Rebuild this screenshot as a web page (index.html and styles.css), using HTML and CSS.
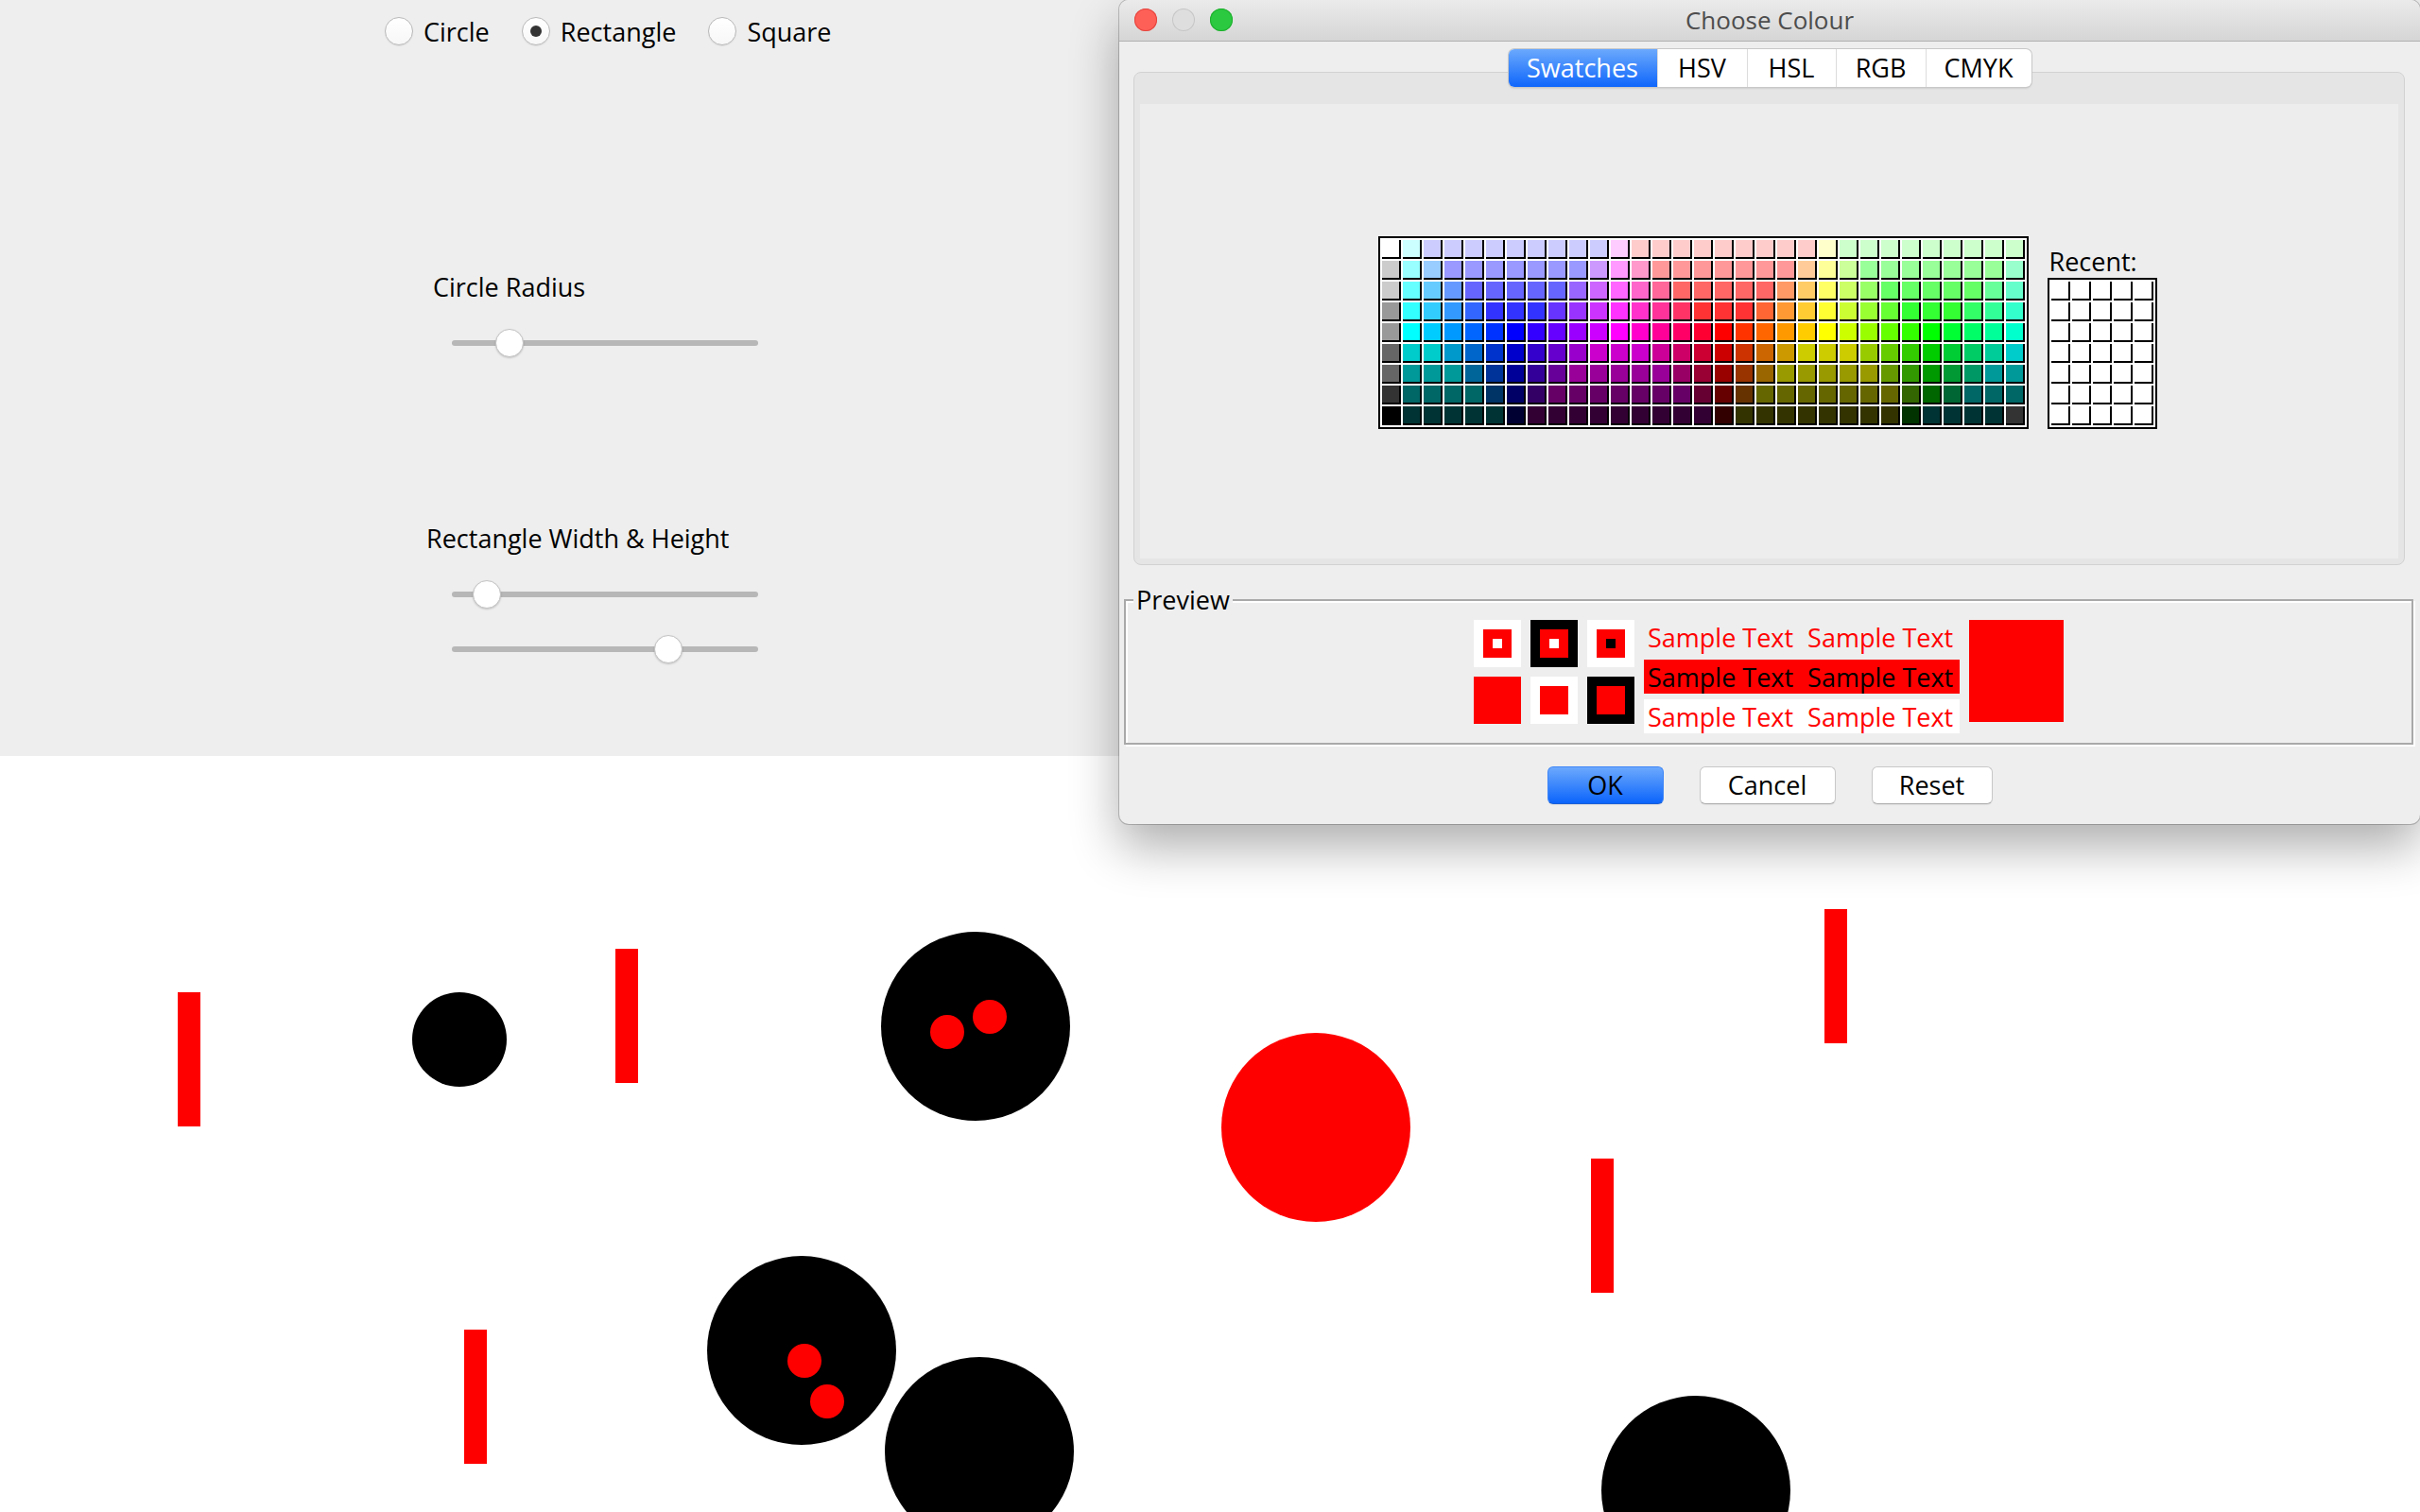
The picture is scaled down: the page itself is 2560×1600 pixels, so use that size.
FILE: index.html
```html
<!DOCTYPE html>
<html lang="en">
<head>
<meta charset="utf-8">
<title>Shapes</title>
<link rel="stylesheet" href="styles.css">
</head>
<body>
<main class="app">
  <section class="controls">
    <div class="radios">
      <label class="radio"><span class="radio-box"></span><span class="radio-text">Circle</span></label>
      <label class="radio"><span class="radio-box on"></span><span class="radio-text">Rectangle</span></label>
      <label class="radio"><span class="radio-box"></span><span class="radio-text">Square</span></label>
    </div>
    <div class="ctl-label label-radius">Circle Radius</div>
    <div class="slider s1"><span class="thumb" style="left:46px"></span></div>
    <div class="ctl-label label-rect">Rectangle Width &amp; Height</div>
    <div class="slider s2"><span class="thumb" style="left:22px"></span></div>
    <div class="slider s3"><span class="thumb" style="left:214px"></span></div>
  </section>
  <section class="canvas">
    <div class="shape rect" style="left:188px;top:250px"></div>
    <div class="shape rect" style="left:651px;top:204px"></div>
    <div class="shape rect" style="left:1930px;top:162px"></div>
    <div class="shape rect" style="left:1683px;top:426px"></div>
    <div class="shape rect" style="left:491px;top:607px"></div>
    <div class="shape circle small black" style="left:436px;top:250px"></div>
    <div class="shape circle big black" style="left:932px;top:186px"></div>
    <div class="shape circle dot" style="left:984px;top:274px"></div>
    <div class="shape circle dot" style="left:1029px;top:258px"></div>
    <div class="shape circle big red" style="left:1292px;top:293px"></div>
    <div class="shape circle big black" style="left:748px;top:529px"></div>
    <div class="shape circle dot" style="left:833px;top:622px"></div>
    <div class="shape circle dot" style="left:857px;top:665px"></div>
    <div class="shape circle big black" style="left:936px;top:636px"></div>
    <div class="shape circle big black" style="left:1694px;top:677px"></div>
  </section>
</main>

<div class="dialog">
  <header class="titlebar">
    <div class="lights"><span class="light close"></span><span class="light min"></span><span class="light zoom"></span></div>
    <div class="title">Choose Colour</div>
    <div></div>
  </header>

  <nav class="tabs">
    <span class="tab sel w1">Swatches</span>
    <span class="tab w2">HSV</span>
    <span class="tab w3">HSL</span>
    <span class="tab w4">RGB</span>
    <span class="tab w5">CMYK</span>
  </nav>

  <div class="tabpanel">
    <div class="swatch-pane">
      <div class="swatch-row">
        <div class="swatches main-grid">
<i style="background:#fff"></i><i style="background:#cff"></i><i style="background:#ccf"></i><i style="background:#ccf"></i><i style="background:#ccf"></i><i style="background:#ccf"></i><i style="background:#ccf"></i><i style="background:#ccf"></i><i style="background:#ccf"></i><i style="background:#ccf"></i><i style="background:#ccf"></i><i style="background:#fcf"></i><i style="background:#fcc"></i><i style="background:#fcc"></i><i style="background:#fcc"></i><i style="background:#fcc"></i><i style="background:#fcc"></i><i style="background:#fcc"></i><i style="background:#fcc"></i><i style="background:#fcc"></i><i style="background:#fcc"></i><i style="background:#ffc"></i><i style="background:#cfc"></i><i style="background:#cfc"></i><i style="background:#cfc"></i><i style="background:#cfc"></i><i style="background:#cfc"></i><i style="background:#cfc"></i><i style="background:#cfc"></i><i style="background:#cfc"></i><i style="background:#cfc"></i>
<i style="background:#ccc"></i><i style="background:#9ff"></i><i style="background:#9cf"></i><i style="background:#99f"></i><i style="background:#99f"></i><i style="background:#99f"></i><i style="background:#99f"></i><i style="background:#99f"></i><i style="background:#99f"></i><i style="background:#99f"></i><i style="background:#c9f"></i><i style="background:#f9f"></i><i style="background:#f9c"></i><i style="background:#f99"></i><i style="background:#f99"></i><i style="background:#f99"></i><i style="background:#f99"></i><i style="background:#f99"></i><i style="background:#f99"></i><i style="background:#f99"></i><i style="background:#fc9"></i><i style="background:#ff9"></i><i style="background:#cf9"></i><i style="background:#9f9"></i><i style="background:#9f9"></i><i style="background:#9f9"></i><i style="background:#9f9"></i><i style="background:#9f9"></i><i style="background:#9f9"></i><i style="background:#9f9"></i><i style="background:#9fc"></i>
<i style="background:#ccc"></i><i style="background:#6ff"></i><i style="background:#6cf"></i><i style="background:#69f"></i><i style="background:#66f"></i><i style="background:#66f"></i><i style="background:#66f"></i><i style="background:#66f"></i><i style="background:#66f"></i><i style="background:#96f"></i><i style="background:#c6f"></i><i style="background:#f6f"></i><i style="background:#f6c"></i><i style="background:#f69"></i><i style="background:#f66"></i><i style="background:#f66"></i><i style="background:#f66"></i><i style="background:#f66"></i><i style="background:#f66"></i><i style="background:#f96"></i><i style="background:#fc6"></i><i style="background:#ff6"></i><i style="background:#cf6"></i><i style="background:#9f6"></i><i style="background:#6f6"></i><i style="background:#6f6"></i><i style="background:#6f6"></i><i style="background:#6f6"></i><i style="background:#6f6"></i><i style="background:#6f9"></i><i style="background:#6fc"></i>
<i style="background:#999"></i><i style="background:#3ff"></i><i style="background:#3cf"></i><i style="background:#39f"></i><i style="background:#36f"></i><i style="background:#33f"></i><i style="background:#33f"></i><i style="background:#33f"></i><i style="background:#63f"></i><i style="background:#93f"></i><i style="background:#c3f"></i><i style="background:#f3f"></i><i style="background:#f3c"></i><i style="background:#f39"></i><i style="background:#f36"></i><i style="background:#f33"></i><i style="background:#f33"></i><i style="background:#f33"></i><i style="background:#f63"></i><i style="background:#f93"></i><i style="background:#fc3"></i><i style="background:#ff3"></i><i style="background:#cf3"></i><i style="background:#9f3"></i><i style="background:#6f3"></i><i style="background:#3f3"></i><i style="background:#3f3"></i><i style="background:#3f3"></i><i style="background:#3f6"></i><i style="background:#3f9"></i><i style="background:#3fc"></i>
<i style="background:#999"></i><i style="background:#0ff"></i><i style="background:#0cf"></i><i style="background:#09f"></i><i style="background:#06f"></i><i style="background:#03f"></i><i style="background:#00f"></i><i style="background:#30f"></i><i style="background:#60f"></i><i style="background:#90f"></i><i style="background:#c0f"></i><i style="background:#f0f"></i><i style="background:#f0c"></i><i style="background:#f09"></i><i style="background:#f06"></i><i style="background:#f03"></i><i style="background:#f00"></i><i style="background:#f30"></i><i style="background:#f60"></i><i style="background:#f90"></i><i style="background:#fc0"></i><i style="background:#ff0"></i><i style="background:#cf0"></i><i style="background:#9f0"></i><i style="background:#6f0"></i><i style="background:#3f0"></i><i style="background:#0f0"></i><i style="background:#0f3"></i><i style="background:#0f6"></i><i style="background:#0f9"></i><i style="background:#0fc"></i>
<i style="background:#666"></i><i style="background:#0cc"></i><i style="background:#0cc"></i><i style="background:#09c"></i><i style="background:#06c"></i><i style="background:#03c"></i><i style="background:#00c"></i><i style="background:#30c"></i><i style="background:#60c"></i><i style="background:#90c"></i><i style="background:#c0c"></i><i style="background:#c0c"></i><i style="background:#c0c"></i><i style="background:#c09"></i><i style="background:#c06"></i><i style="background:#c03"></i><i style="background:#c00"></i><i style="background:#c30"></i><i style="background:#c60"></i><i style="background:#c90"></i><i style="background:#cc0"></i><i style="background:#cc0"></i><i style="background:#cc0"></i><i style="background:#9c0"></i><i style="background:#6c0"></i><i style="background:#3c0"></i><i style="background:#0c0"></i><i style="background:#0c3"></i><i style="background:#0c6"></i><i style="background:#0c9"></i><i style="background:#0cc"></i>
<i style="background:#666"></i><i style="background:#099"></i><i style="background:#099"></i><i style="background:#099"></i><i style="background:#069"></i><i style="background:#039"></i><i style="background:#009"></i><i style="background:#309"></i><i style="background:#609"></i><i style="background:#909"></i><i style="background:#909"></i><i style="background:#909"></i><i style="background:#909"></i><i style="background:#909"></i><i style="background:#906"></i><i style="background:#903"></i><i style="background:#900"></i><i style="background:#930"></i><i style="background:#960"></i><i style="background:#990"></i><i style="background:#990"></i><i style="background:#990"></i><i style="background:#990"></i><i style="background:#990"></i><i style="background:#690"></i><i style="background:#390"></i><i style="background:#090"></i><i style="background:#093"></i><i style="background:#096"></i><i style="background:#099"></i><i style="background:#099"></i>
<i style="background:#333"></i><i style="background:#066"></i><i style="background:#066"></i><i style="background:#066"></i><i style="background:#066"></i><i style="background:#036"></i><i style="background:#006"></i><i style="background:#306"></i><i style="background:#606"></i><i style="background:#606"></i><i style="background:#606"></i><i style="background:#606"></i><i style="background:#606"></i><i style="background:#606"></i><i style="background:#606"></i><i style="background:#603"></i><i style="background:#600"></i><i style="background:#630"></i><i style="background:#660"></i><i style="background:#660"></i><i style="background:#660"></i><i style="background:#660"></i><i style="background:#660"></i><i style="background:#660"></i><i style="background:#660"></i><i style="background:#360"></i><i style="background:#060"></i><i style="background:#063"></i><i style="background:#066"></i><i style="background:#066"></i><i style="background:#066"></i>
<i style="background:#000"></i><i style="background:#033"></i><i style="background:#033"></i><i style="background:#033"></i><i style="background:#033"></i><i style="background:#033"></i><i style="background:#003"></i><i style="background:#303"></i><i style="background:#303"></i><i style="background:#303"></i><i style="background:#303"></i><i style="background:#303"></i><i style="background:#303"></i><i style="background:#303"></i><i style="background:#303"></i><i style="background:#303"></i><i style="background:#300"></i><i style="background:#330"></i><i style="background:#330"></i><i style="background:#330"></i><i style="background:#330"></i><i style="background:#330"></i><i style="background:#330"></i><i style="background:#330"></i><i style="background:#330"></i><i style="background:#030"></i><i style="background:#033"></i><i style="background:#033"></i><i style="background:#033"></i><i style="background:#033"></i><i style="background:#333"></i>
        </div>
        <div class="recent-col">
          <div class="recent-label">Recent:</div>
          <div class="swatches recent-grid">
<i></i><i></i><i></i><i></i><i></i>
<i></i><i></i><i></i><i></i><i></i>
<i></i><i></i><i></i><i></i><i></i>
<i></i><i></i><i></i><i></i><i></i>
<i></i><i></i><i></i><i></i><i></i>
<i></i><i></i><i></i><i></i><i></i>
<i></i><i></i><i></i><i></i><i></i>
          </div>
        </div>
      </div>
    </div>
  </div>

  <fieldset class="preview">
    <legend>Preview</legend>
    <div class="pv">
      <div class="pv-squares">
        <div class="sq bg-white"><div class="sq-in"><span class="sq-dot d-white"></span></div></div>
        <div class="sq bg-black"><div class="sq-in"><span class="sq-dot d-white"></span></div></div>
        <div class="sq bg-white"><div class="sq-in"><span class="sq-dot d-black"></span></div></div>
        <div class="sq bg-red"></div>
        <div class="sq bg-white"><div class="sq-in"></div></div>
        <div class="sq bg-black"><div class="sq-in"></div></div>
      </div>
      <div class="pv-texts">
        <div class="pt"><span>Sample Text</span><span>Sample Text</span></div>
        <div class="pt pt-inv"><span>Sample Text</span><span>Sample Text</span></div>
        <div class="pt pt-white"><span>Sample Text</span><span>Sample Text</span></div>
      </div>
      <div class="pv-big"></div>
    </div>
  </fieldset>

  <div class="buttons">
    <button class="btn btn-ok">OK</button>
    <button class="btn btn-cancel">Cancel</button>
    <button class="btn btn-reset">Reset</button>
  </div>
</div>
</body>
</html>
```

FILE: styles.css
```css
* { box-sizing: border-box; }

html, body { margin: 0; padding: 0; }

body {
  width: 2560px;
  height: 1600px;
  overflow: hidden;
  position: relative;
  background: #fff;
  color: #000;
  font-family: "Open Sans", "DejaVu Sans", sans-serif;
  font-size: 27px;
}

/* ---------- left controls ---------- */
.controls {
  height: 800px;
  background: #eeeeee;
  padding-top: 18px;
}

.radios {
  display: flex;
  height: 30px;
  margin-left: 407px;
}

.radio {
  display: flex;
  align-items: flex-start;
  margin-right: 34px;
}

.radio-box {
  width: 30px;
  height: 30px;
  border-radius: 50%;
  background: linear-gradient(#ffffff, #f7f7f7);
  border: 1px solid #b8b8b8;
  box-shadow: 0 1px 1px rgba(0, 0, 0, 0.08);
  display: flex;
  align-items: center;
  justify-content: center;
}

.radio-box.on::after {
  content: "";
  width: 12px;
  height: 12px;
  border-radius: 50%;
  background: #333;
}

.radio-text {
  margin-left: 11px;
  line-height: 30px;
  padding-top: 0.5px;
}

.ctl-label {
  height: 30px;
  line-height: 30px;
  white-space: nowrap;
}

.label-radius { margin-top: 240.5px; padding-left: 458px; }
.label-rect { margin-top: 176.5px; padding-left: 451px; }

.slider {
  position: relative;
  width: 324px;
  height: 30px;
  margin-left: 478px;
}

.slider::before {
  content: "";
  position: absolute;
  left: 0;
  right: 0;
  top: 12px;
  height: 6px;
  border-radius: 3px;
  background: #b7b7b7;
}

.s1 { margin-top: 29.5px; }
.s2 { margin-top: 29.5px; }
.s3 { margin-top: 28px; }

.thumb {
  position: absolute;
  top: 0;
  width: 30px;
  height: 30px;
  border-radius: 50%;
  background: #fff;
  border: 1px solid #c3c3c3;
  box-shadow: 0 1px 2px rgba(0, 0, 0, 0.18);
}

/* ---------- drawing canvas ---------- */
.canvas {
  position: relative;
  height: 800px;
  background: #fff;
}

.shape { position: absolute; }
.rect { width: 24px; height: 142px; background: #ff0000; }
.circle { border-radius: 50%; }
.big { width: 200px; height: 200px; }
.small { width: 100px; height: 100px; }
.dot { width: 36px; height: 36px; background: #ff0000; }
.black { background: #000; }
.red { background: #ff0000; }

/* ---------- dialog window ---------- */
.dialog {
  position: absolute;
  left: 1184px;
  top: 0;
  width: 1376px;
  height: 872px;
  background: #eeeeee;
  border-radius: 10px;
  box-shadow: 0 0 0 1px rgba(0, 0, 0, 0.2), 0 24px 52px rgba(0, 0, 0, 0.32);
  display: flex;
  flex-direction: column;
  align-items: center;
  overflow: hidden;
}

.titlebar {
  align-self: stretch;
  height: 44px;
  display: grid;
  grid-template-columns: 1fr auto 1fr;
  align-items: center;
  padding: 0 16px;
  background: linear-gradient(#ebebeb, #d5d5d5);
  border-bottom: 1px solid #b1b1b1;
}

.lights { display: flex; gap: 16px; margin-top: -1px; }

.light {
  width: 24px;
  height: 24px;
  border-radius: 50%;
}

.light.close { background: #fe5f57; box-shadow: inset 0 0 0 1px #e2463f; }
.light.min { background: #dedede; box-shadow: inset 0 0 0 1px #c6c6c6; }
.light.zoom { background: #2ac940; box-shadow: inset 0 0 0 1px #1fae2d; }

.title {
  font-size: 26px;
  line-height: 43px;
  color: #4d4d4d;
}

.tabs {
  position: relative;
  z-index: 1;
  display: flex;
  height: 40px;
  margin-top: 8px;
  background: #fff;
  border-radius: 6px;
  overflow: hidden;
  box-shadow: 0 0 0 1px #c8c8c8, 0 2px 2px rgba(0, 0, 0, 0.1);
}

.tab {
  display: block;
  text-align: center;
  line-height: 40px;
  border-left: 1px solid #dcdcdc;
}

.tab.sel {
  border-left: none;
  color: #fff;
  background: linear-gradient(#6ba9fd, #0f66fb);
}

.w1 { width: 157px; }
.w2 { width: 95px; }
.w3 { width: 94px; }
.w4 { width: 95px; }
.w5 { width: 112px; }

.tabpanel {
  align-self: stretch;
  margin: -16px 16px 0 15px;
  height: 522px;
  border: 1px solid #d2d2d2;
  border-radius: 8px;
  background: #e5e5e5;
  padding: 33px 6px 6px 6px;
}

.swatch-pane {
  height: 100%;
  background: #ededed;
  display: flex;
  justify-content: center;
  align-items: flex-start;
  padding-top: 140px;
  padding-right: 4px;
}

.swatch-row {
  display: flex;
  align-items: flex-end;
  gap: 20px;
}

.swatches {
  display: grid;
  grid-auto-rows: 20px;
  gap: 2px;
  padding: 2px;
  background: #fff;
  border: 2px solid #000;
}

.swatches i {
  display: block;
  background: #fff;
  box-shadow: inset -2px -2px 0 #000;
}

.main-grid { grid-template-columns: repeat(31, 20px); }
.recent-grid { grid-template-columns: repeat(5, 20px); }

.recent-col { display: flex; flex-direction: column; }

.recent-label {
  line-height: 35px;
  padding-left: 2px;
}

/* ---------- preview ---------- */
.preview {
  align-self: stretch;
  margin: 20px 7px 0 5px;
  padding: 4px 0 10px 0;
  min-inline-size: 0;
  border: 2px solid #a9a9a9;
  box-shadow: 2px 2px 0 #fff, inset 2px 2px 0 #fff;
}

.preview legend {
  margin-left: 8px;
  padding: 0 3px;
  line-height: 34px;
  background: #eeeeee;
}

.pv {
  display: flex;
  justify-content: center;
  align-items: flex-start;
  gap: 10px;
}

.pv-squares {
  display: grid;
  grid-template-columns: repeat(3, 50px);
  grid-auto-rows: 50px;
  gap: 10px;
}

.sq {
  display: flex;
  align-items: center;
  justify-content: center;
}

.bg-white { background: #fff; }
.bg-black { background: #000; }
.bg-red { background: #ff0000; }

.sq-in {
  width: 30px;
  height: 30px;
  background: #ff0000;
  display: flex;
  align-items: center;
  justify-content: center;
}

.sq-dot { width: 10px; height: 10px; }
.d-white { background: #fff; }
.d-black { background: #000; }

.pv-texts {
  display: flex;
  flex-direction: column;
  gap: 6px;
  width: 334px;
}

.pt {
  height: 36px;
  line-height: 37px;
  display: flex;
  gap: 15px;
  padding-left: 4px;
  white-space: nowrap;
  color: #ff0000;
}

.pt-inv { background: #ff0000; color: #000; }
.pt-white { background: #fff; }

.pv-big {
  width: 100px;
  height: 108px;
  background: #ff0000;
}

/* ---------- buttons ---------- */
.buttons {
  display: flex;
  gap: 38px;
  margin-top: 23px;
}

.btn {
  height: 40px;
  padding: 0;
  font: inherit;
  line-height: 38px;
  color: #000;
  text-align: center;
  background: #fff;
  border: 1px solid #c8c8c8;
  border-bottom-color: #adadad;
  border-radius: 6px;
  box-shadow: 0 1px 1px rgba(0, 0, 0, 0.06);
}

.btn-ok {
  width: 123px;
  background: linear-gradient(#6ca9fd, #0b64fb);
  border-color: #3f86f7;
  border-bottom-color: #1b5fd6;
}

.btn-cancel { width: 144px; }
.btn-reset { width: 128px; }
```
